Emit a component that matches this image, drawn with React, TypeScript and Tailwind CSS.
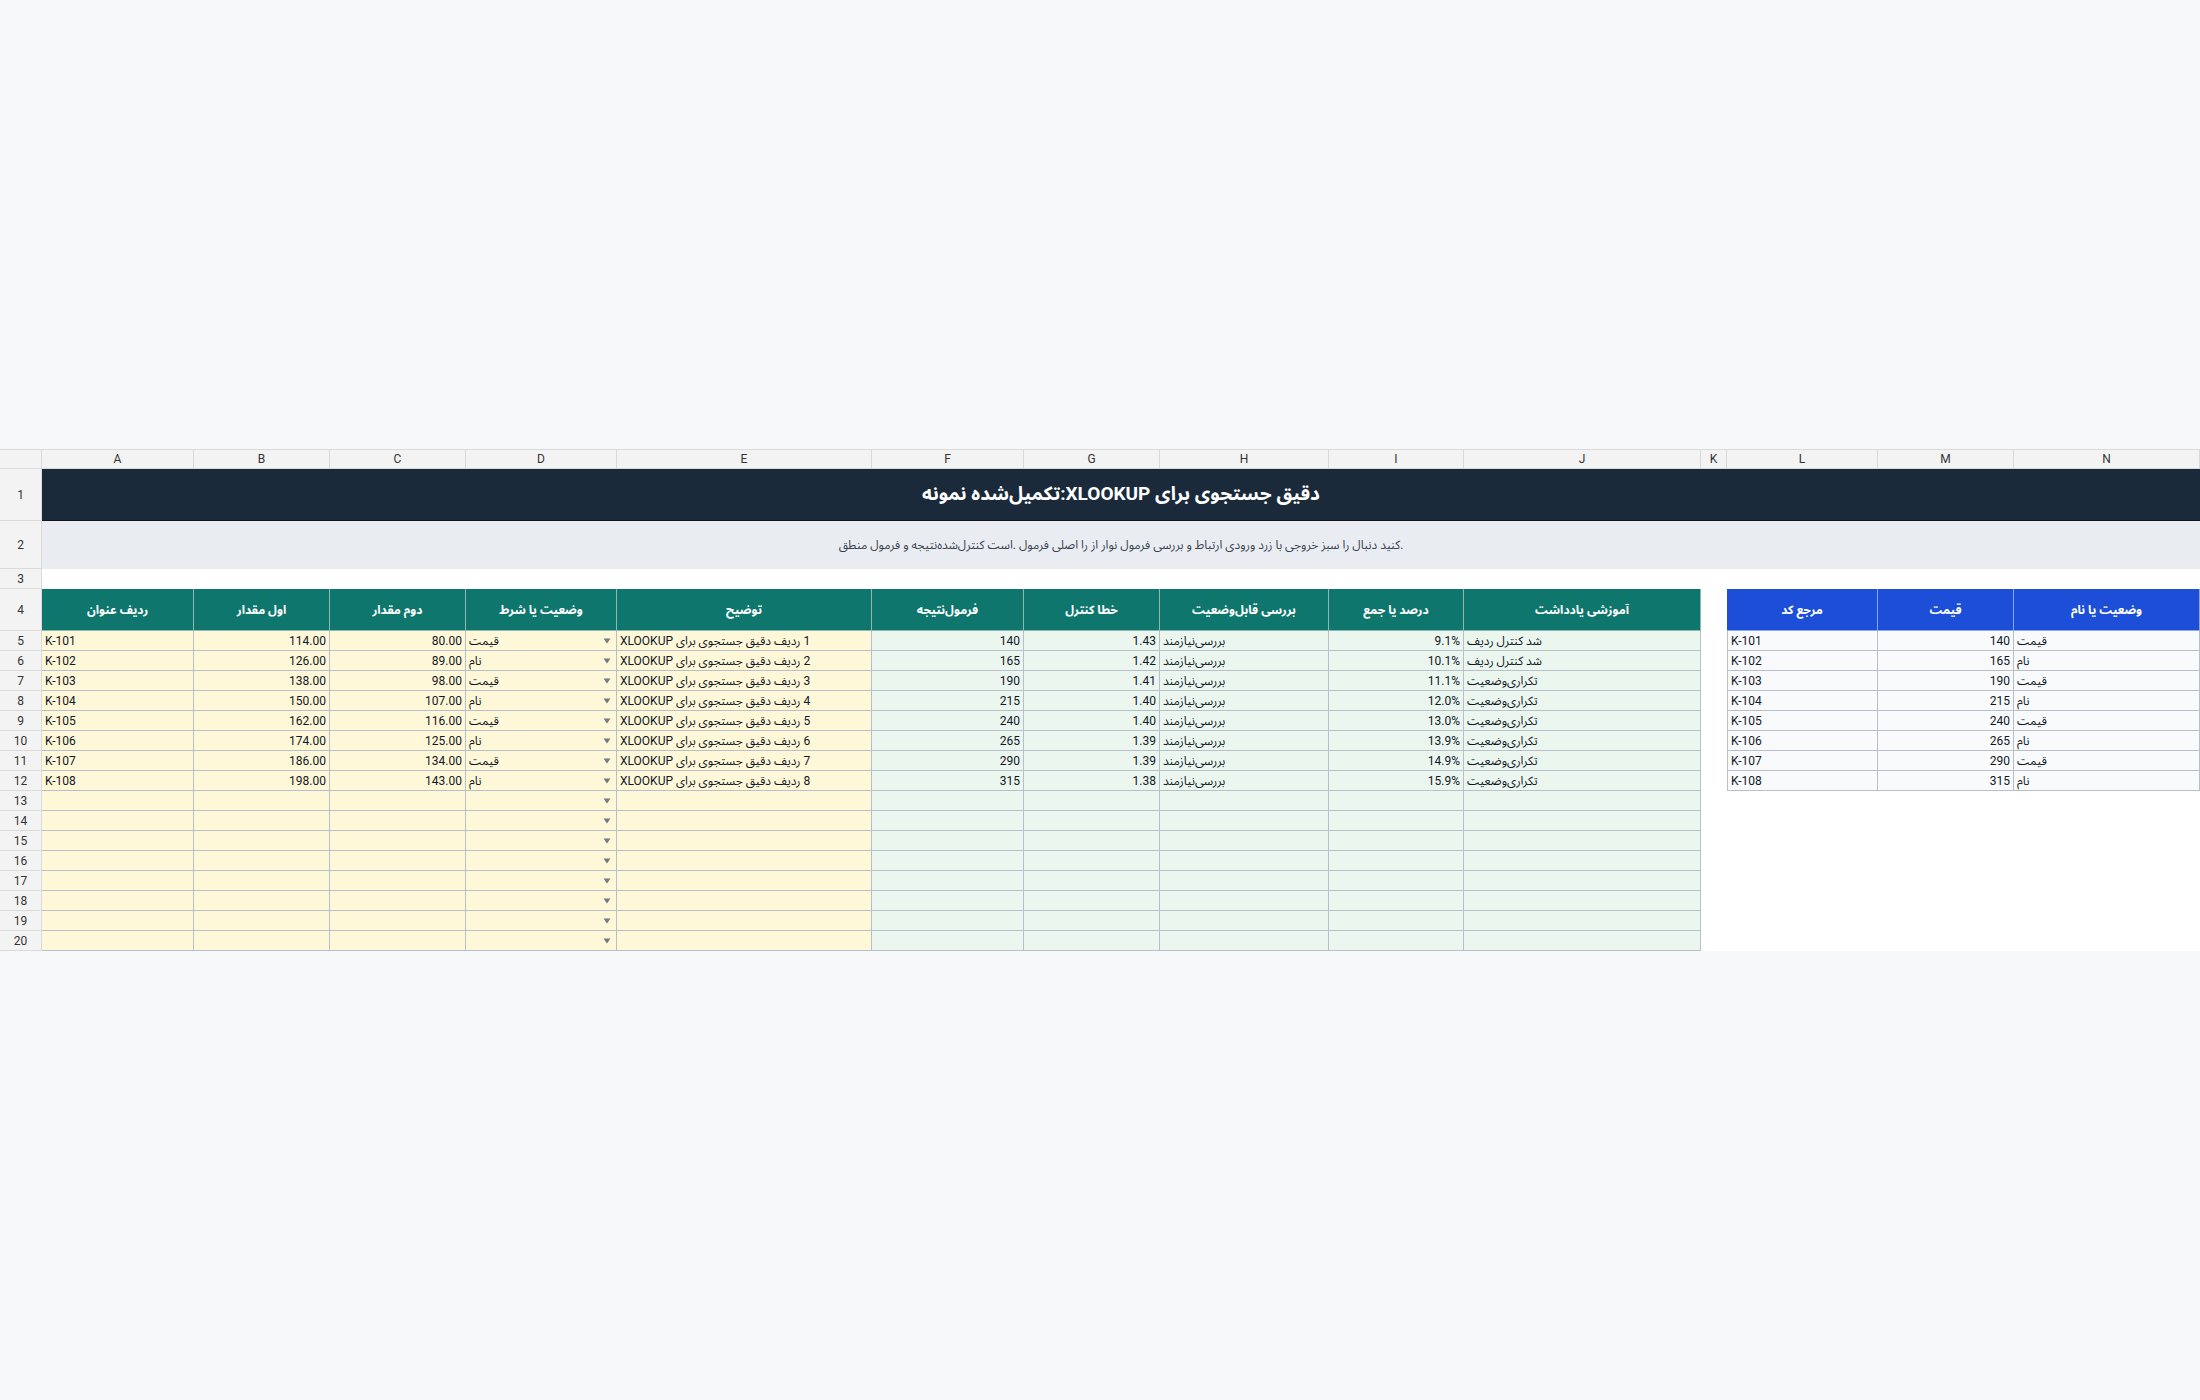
import React from "react";

const COLS = ["A", "B", "C", "D", "E", "F", "G", "H", "I", "J", "K", "L", "M", "N"];

const B = [114, 126, 138, 150, 162, 174, 186, 198];
const C = [80, 89, 98, 107, 116, 125, 134, 143];
const F = [140, 165, 190, 215, 240, 265, 290, 315];
const G = ["1.43", "1.42", "1.41", "1.40", "1.40", "1.39", "1.39", "1.38"];
const I = ["9.1%", "10.1%", "11.1%", "12.0%", "13.0%", "13.9%", "14.9%", "15.9%"];

const font = "font-['Roboto','Noto_Sans_Arabic',sans-serif]";
const headFont = "font-['Liberation_Sans_Narrow','Roboto',sans-serif]";

const gridLine = "border-r border-b border-[#b7c0ca]";

function RowNum({ n }: { n: number }) {
  return (
    <div className={`flex items-center justify-center bg-[#f3f3f3] border-r border-b border-[#dadada] text-[12px] text-[#333] ${headFont}`}>
      {n}
    </div>
  );
}

function Arrow() {
  return (
    <svg width="8" height="6" viewBox="0 0 8 6" className="mr-[2px] shrink-0">
      <polygon points="0.5,0.5 7.5,0.5 4,5.5" fill="#737b86" />
    </svg>
  );
}

function Cell({
  bg,
  align = "left",
  rtl = false,
  arrow = false,
  children,
}: {
  bg: string;
  align?: "left" | "right";
  rtl?: boolean;
  arrow?: boolean;
  children?: React.ReactNode;
}) {
  return (
    <div
      className={`${bg} ${gridLine} flex items-center px-[3px] overflow-hidden whitespace-nowrap text-[12px] text-[#111827] ${
        align === "right" ? "justify-end" : arrow ? "justify-between" : "justify-start"
      }`}
    >
      {children !== undefined ? <span dir={rtl ? "rtl" : "ltr"}>{children}</span> : <span />}
      {arrow && <Arrow />}
    </div>
  );
}

function Header({ children }: { children?: React.ReactNode }) {
  return (
    <div className="bg-[#0f766e] border-r border-b border-[#8fb8b2] flex items-center justify-center text-white font-bold text-[12px] whitespace-nowrap">
      <span dir="rtl">{children}</span>
    </div>
  );
}

function BlueHeader({ children }: { children?: React.ReactNode }) {
  return (
    <div className="bg-[#1d4ed8] border-r border-b border-[#8ea6e8] flex items-center justify-center text-white font-bold text-[12px] whitespace-nowrap">
      <span dir="rtl">{children}</span>
    </div>
  );
}

export default function App() {
  const yellow = "bg-[#fef7d8]";
  const green = "bg-[#eaf6ee]";
  const light = "bg-[#f8fafc]";

  const rows: React.ReactNode[] = [];
  for (let r = 5; r <= 20; r++) {
    const i = r - 5;
    const has = i < 8;
    const name = i % 2 === 0 ? "قیمت" : "نام";
    rows.push(
      <React.Fragment key={r}>
        <RowNum n={r} />
        <Cell bg={yellow}>{has ? `K-${101 + i}` : undefined}</Cell>
        <Cell bg={yellow} align="right">{has ? B[i].toFixed(2) : undefined}</Cell>
        <Cell bg={yellow} align="right">{has ? C[i].toFixed(2) : undefined}</Cell>
        <Cell bg={yellow} rtl arrow>{has ? name : undefined}</Cell>
        <Cell bg={yellow} rtl>{has ? `${i + 1} ردیف دقیق جستجوی برای XLOOKUP` : undefined}</Cell>
        <Cell bg={green} align="right">{has ? F[i] : undefined}</Cell>
        <Cell bg={green} align="right">{has ? G[i] : undefined}</Cell>
        <Cell bg={green} rtl>{has ? "بررسی‌نیازمند" : undefined}</Cell>
        <Cell bg={green} align="right">{has ? I[i] : undefined}</Cell>
        <Cell bg={green} rtl>{has ? (i < 2 ? "شد  کنترل ردیف" : "تکراری‌وضعیت") : undefined}</Cell>
        <div className="bg-white" />
        {has ? (
          <>
            <div className={`${light} border-l border-r border-b border-[#b7c0ca] flex items-center px-[3px] text-[12px] text-[#111827]`}>
              K-{101 + i}
            </div>
            <Cell bg={light} align="right">{F[i]}</Cell>
            <Cell bg={light} rtl>{name}</Cell>
          </>
        ) : (
          <>
            <div className="bg-white" />
            <div className="bg-white" />
            <div className="bg-white" />
          </>
        )}
      </React.Fragment>
    );
  }

  return (
    <div className={`w-[2200px] h-[1400px] bg-[#f6f8fa] flex flex-col justify-center ${font}`}>
      <div className="grid grid-cols-[42px_152px_136px_136px_151px_255px_152px_136px_169px_135px_237px_26px_151px_136px_186px] grid-rows-[20px_52px_48px_20px_42px_repeat(16,20px)] bg-white">
        {/* column letters */}
        <div className="bg-[#f3f3f3] border-t border-r border-b border-[#dadada]" />
        {COLS.map((c) => (
          <div
            key={c}
            className={`bg-[#f3f3f3] border-t border-r border-b border-[#dadada] flex items-center justify-center text-[12px] text-[#333] ${headFont}`}
          >
            {c}
          </div>
        ))}

        {/* row 1 title */}
        <RowNum n={1} />
        <div className="col-span-14 bg-[#1a2a3a] border-b border-[#0b1622] flex items-center justify-center text-white font-bold text-[19px]">
          <span dir="rtl">دقیق جستجوی برای XLOOKUP:تکمیل‌شده نمونه</span>
        </div>

        {/* row 2 description */}
        <RowNum n={2} />
        <div className="col-span-14 bg-[#e9edf1] flex items-center justify-center text-[12px] text-[#374151]">
          <span dir="rtl">
            .کنید دنبال را سبز خروجی با زرد ورودی ارتباط و بررسی فرمول نوار از را اصلی فرمول .است کنترل‌شده‌نتیجه و فرمول منطق
          </span>
        </div>

        {/* row 3 */}
        <RowNum n={3} />
        <div className="col-span-14 bg-white" />

        {/* row 4 headers */}
        <RowNum n={4} />
        <Header>ردیف عنوان</Header>
        <Header>اول مقدار</Header>
        <Header>دوم مقدار</Header>
        <Header>وضعیت یا شرط</Header>
        <Header>توضیح</Header>
        <Header>فرمول‌نتیجه</Header>
        <Header>خطا کنترل</Header>
        <Header>بررسی قابل‌وضعیت</Header>
        <Header>درصد یا جمع</Header>
        <Header>آموزشی یادداشت</Header>
        <div className="bg-white" />
        <BlueHeader>مرجع کد</BlueHeader>
        <BlueHeader>قیمت</BlueHeader>
        <BlueHeader>وضعیت یا نام</BlueHeader>

        {rows}
      </div>
    </div>
  );
}
